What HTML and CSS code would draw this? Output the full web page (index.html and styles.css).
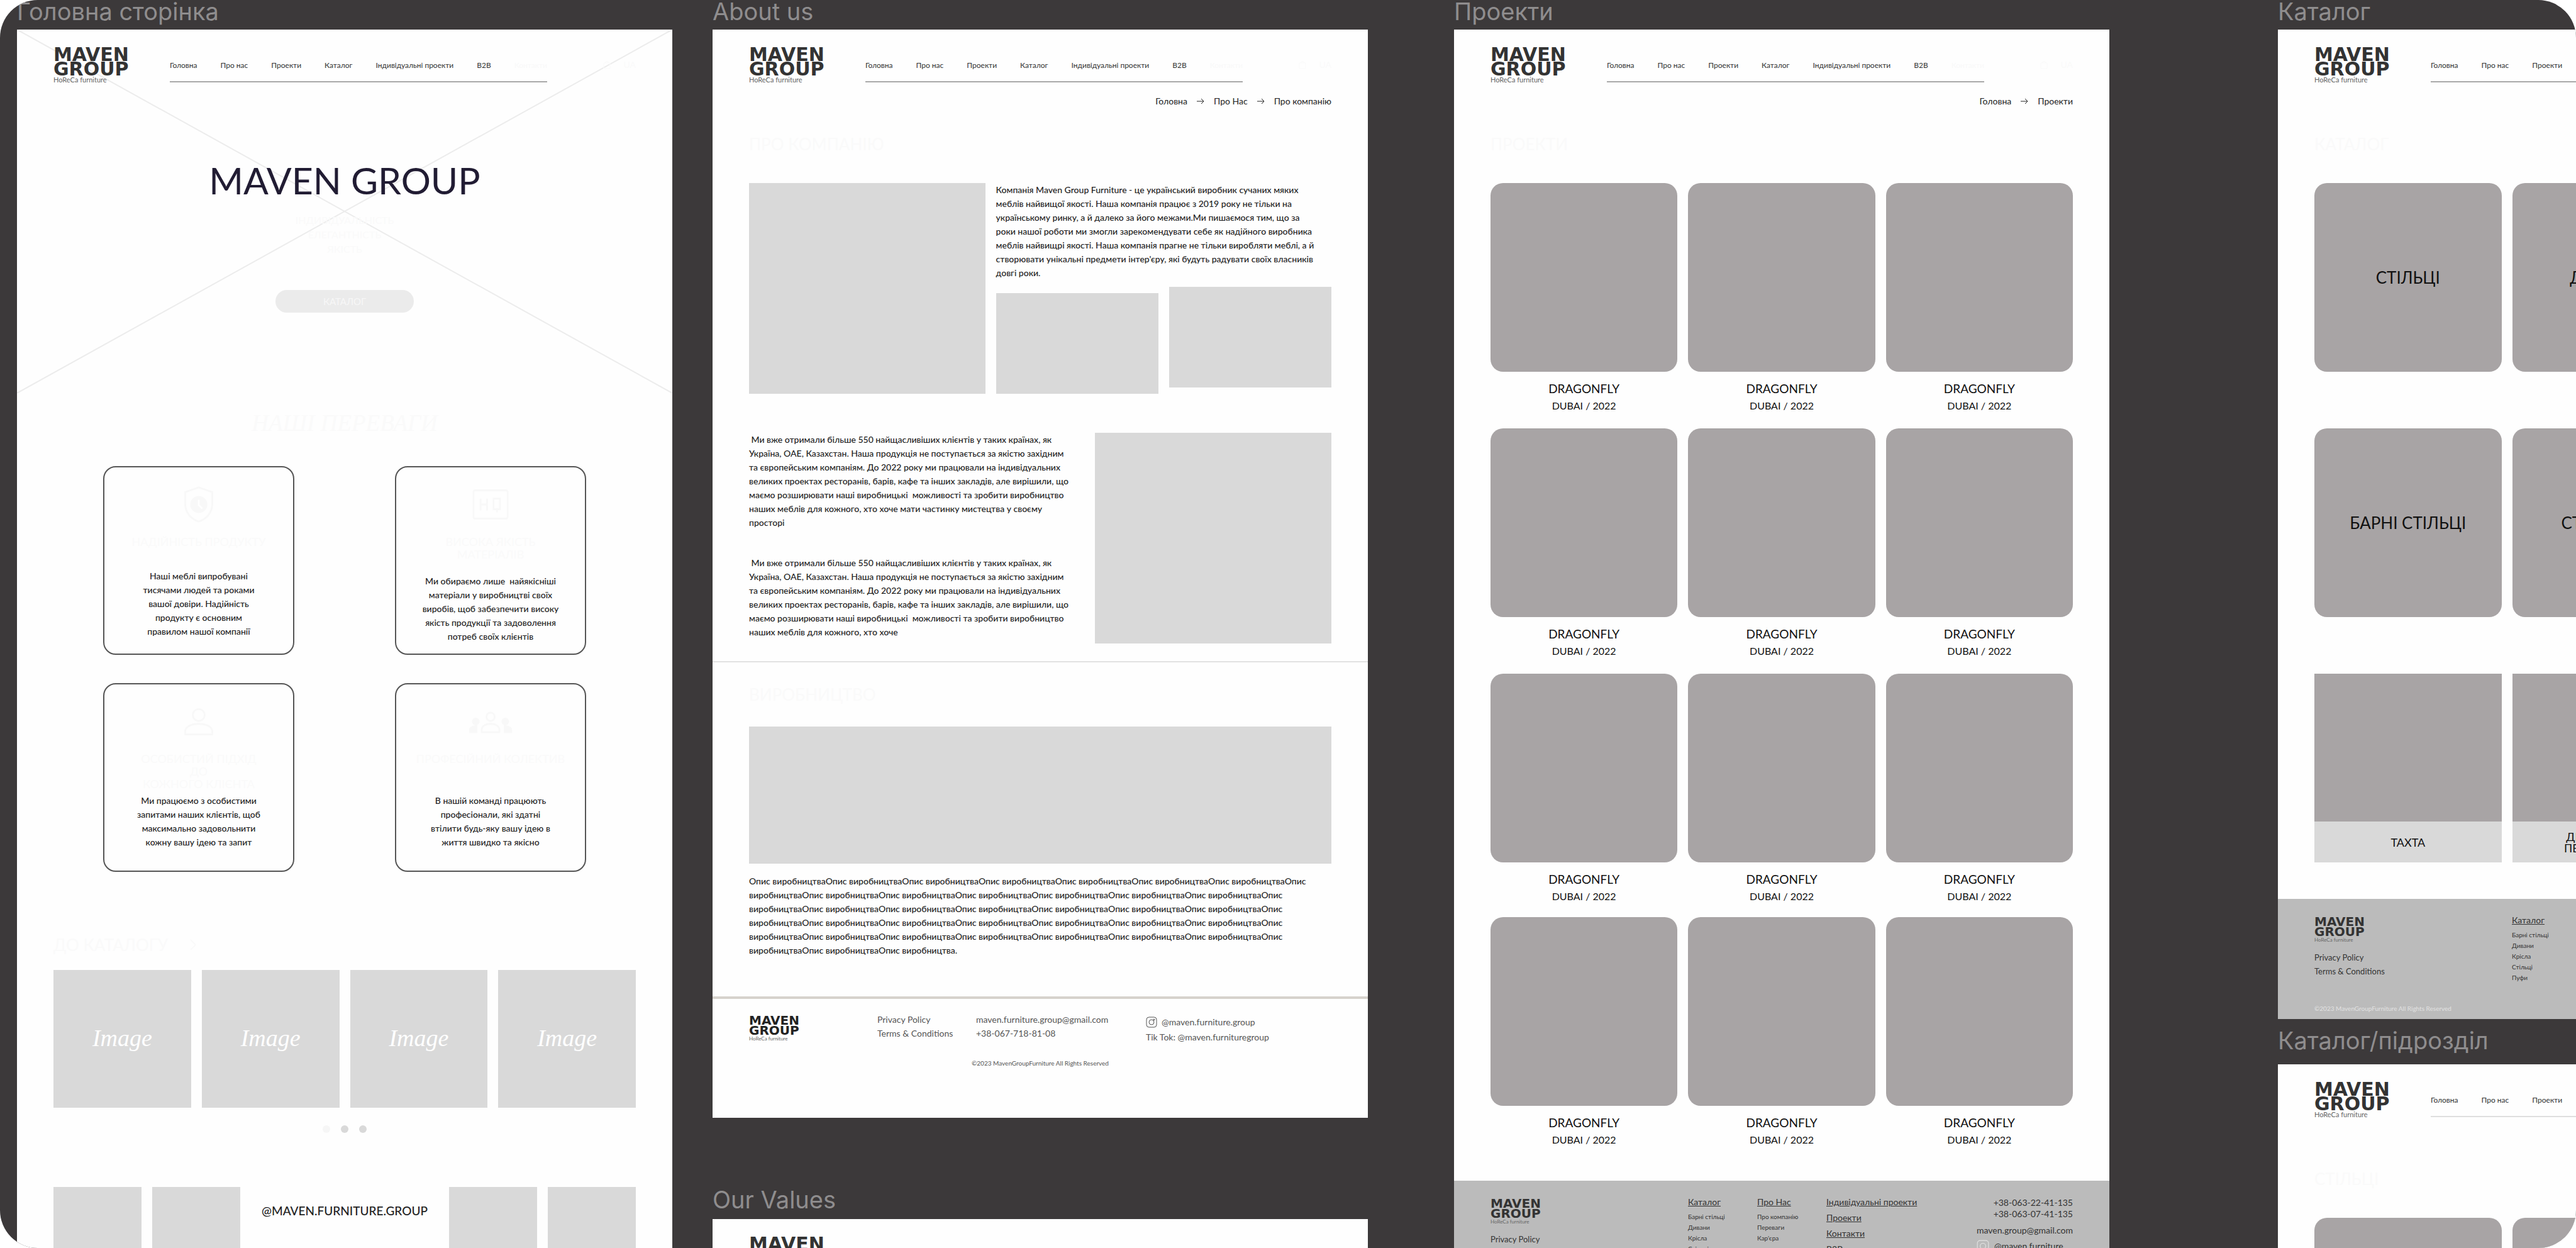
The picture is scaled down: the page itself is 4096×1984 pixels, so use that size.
FILE: index.html
```html
<!DOCTYPE html>
<html lang="uk">
<head>
<meta charset="utf-8">
<title>Maven Group – макети</title>
<link rel="stylesheet" href="styles.css">
</head>
<body>
<main class="canvas">

  <section class="column column-home">
    <h2 class="frame-name">Головна сторінка</h2>
    <article class="artboard">
      <div class="hero">
        <svg class="hero-cross" viewBox="0 0 100 100" preserveAspectRatio="none" aria-hidden="true"><path d="M0 0 100 100M100 0 0 100"/></svg>
        <header class="site-header">
          <div class="logo"><strong>MAVEN<br>GROUP</strong><small>HoReCa furniture</small></div>
          <nav class="menu"><a href="#">Головна</a><a href="#">Про нас</a><a href="#">Проекти</a><a href="#">Каталог</a><a href="#">Індивідуальні проекти</a><a href="#">B2B</a><a href="#" class="faint">Контакти</a></nav>
          <div class="tools"><svg viewBox="0 0 16 16"><path d="M3 5h10v9H3zM5.500 5a2.500 2.500 0 0 1 5 0"/></svg><span>UA</span></div>
        </header>
        <h1 class="hero-title">MAVEN GROUP</h1>
        <p class="hero-values">ІНДИВІДУАЛЬНІСТЬ<br>ЕЛЕГАНТНІСТЬ<br>ЯКІСТЬ</p>
        <button class="hero-button" type="button">КАТАЛОГ</button>
      </div>
      <h2 class="serif-title">НАШІ ПЕРЕВАГИ</h2>
      <div class="features">
        <section class="feature">
          <svg class="feature-icon" viewBox="0 0 64 64"><path d="M32 3 9 11v20c0 14 9 25 23 30 14-5 23-16 23-30V11z"/><circle class="solid" cx="32" cy="32" r="13"/><path class="cut" d="M32 24v9l6 6"/></svg>
          <h3 class="feature-title">НАДІЙНІСТЬ ПРОДУКТУ</h3>
          <p>Наші меблі випробувані<br>тисячами людей та роками<br>вашої довіри. Надійність<br>продукту є основним<br>правилом нашої компанії</p>
        </section>
        <section class="feature">
          <svg class="feature-icon" viewBox="0 0 64 64"><rect x="3" y="8" width="58" height="48" rx="3"/><path d="M15 22v20M15 32h11M26 22v20M37 22h11v18H37zM43 38v7"/></svg>
          <h3 class="feature-title feature-title-mid">ВИСОКА ЯКІСТЬ<br>МАТЕРІАЛІВ</h3>
          <p>Ми обираємо лише&nbsp; найякісніші<br>матеріали у виробництві своїх<br>виробів, щоб забезпечити високу<br>якість продукції та задоволення<br>потреб своїх клієнтів</p>
        </section>
        <section class="feature">
          <svg class="feature-icon" viewBox="0 0 64 64"><circle cx="32" cy="21" r="10"/><path d="M9 54v-5c0-8 10-13 23-13s23 5 23 13v5z"/></svg>
          <h3 class="feature-title feature-title-tall">ОСОБИСТИЙ ПІДХІД<br>ДО<br>КОЖНОГО КЛІЄНТА</h3>
          <p>Ми працюємо з особистими<br>запитами наших клієнтів, щоб<br>максимально задовольнити<br>кожну вашу ідею та запит</p>
        </section>
        <section class="feature">
          <svg class="feature-icon feature-icon-wide" viewBox="0 0 76 64"><circle cx="38" cy="24" r="7"/><path d="M23 50v-4c0-6 6-10 15-10s15 4 15 10v4z"/><circle class="solid" cx="13" cy="32" r="5"/><circle class="solid" cx="63" cy="32" r="5"/><path class="solid" d="M3 50v-4c0-4 5-6 11-6v10zM73 50v-4c0-4-5-6-11-6v10z"/></svg>
          <h3 class="feature-title feature-title-tall">ПРОФЕСІЙНИЙ КОЛЕКТИВ</h3>
          <p>В нашій команді працюють<br>професіонали, які здатні<br>втілити будь-яку вашу ідею в<br>життя швидко та якісно</p>
        </section>
      </div>
      <a class="to-catalog" href="#">ДО КАТАЛОГУ<svg viewBox="0 0 12 20"><path d="m2 2 8 8-8 8"/></svg></a>
      <div class="slides"><div>Image</div><div>Image</div><div>Image</div><div>Image</div></div>
      <div class="dots"><i></i><i></i><i></i></div>
      <div class="instagram"><div class="shot"></div><div class="shot"></div>
        <p class="instagram-name">@MAVEN.FURNITURE.GROUP</p>
        <div class="shot"></div><div class="shot"></div></div>
    </article>
  </section>

  <section class="column column-about">
    <h2 class="frame-name">About us</h2>
    <article class="artboard about">
      <header class="site-header">
        <div class="logo"><strong>MAVEN<br>GROUP</strong><small>HoReCa furniture</small></div>
        <nav class="menu"><a href="#">Головна</a><a href="#">Про нас</a><a href="#">Проекти</a><a href="#">Каталог</a><a href="#">Індивідуальні проекти</a><a href="#">B2B</a><a href="#" class="faint">Контакти</a></nav>
        <div class="tools"><svg viewBox="0 0 16 16"><path d="M3 5h10v9H3zM5.500 5a2.500 2.500 0 0 1 5 0"/></svg><span>UA</span></div>
      </header>
      <nav class="crumbs"><a href="#">Головна</a><svg viewBox="0 0 12 12"><path d="M0 6h11M7 2l4 4-4 4"/></svg><a href="#">Про Нас</a><svg viewBox="0 0 12 12"><path d="M0 6h11M7 2l4 4-4 4"/></svg><a href="#">Про компанію</a></nav>
      <h2 class="page-title">ПРО КОМПАНІЮ</h2>
      <div class="intro">
        <div class="picture"></div>
        <div>
          <p>Компанія Maven Group Furniture - це український виробник сучаних мяких<br>меблів найвищої якості. Наша компанія працює з 2019 року не тільки на<br>українському ринку, а й далеко за його межами.Ми пишаємося тим, що за<br>роки нашої роботи ми змогли зарекомендувати себе як надійного виробника<br>меблів найвищрі якості. Наша компанія прагне не тільки виробляти меблі, а й<br>створювати унікальні предмети інтер'єру, які будуть радувати своїх власників<br>довгі роки.</p>
          <div class="pair"><div class="picture"></div><div class="picture"></div></div>
        </div>
      </div>
      <div class="story">
        <div class="story-text">
          <p>&nbsp;Ми вже отримали більше 550 найщасливіших клієнтів у таких країнах, як<br>Україна, ОАЕ, Казахстан. Наша продукція не поступається за якістю західним<br>та європейським компаніям. До 2022 року ми працювали на індивідуальних<br>великих проектах ресторанів, барів, кафе та інших закладів, але вирішили, що<br>маємо розширювати наші виробницькі&nbsp; можливості та зробити виробництво<br>наших меблів для кожного, хто хоче мати частинку мистецтва у своєму<br>просторі</p>
          <p>&nbsp;Ми вже отримали більше 550 найщасливіших клієнтів у таких країнах, як<br>Україна, ОАЕ, Казахстан. Наша продукція не поступається за якістю західним<br>та європейським компаніям. До 2022 року ми працювали на індивідуальних<br>великих проектах ресторанів, барів, кафе та інших закладів, але вирішили, що<br>маємо розширювати наші виробницькі&nbsp; можливості та зробити виробництво<br>наших меблів для кожного, хто хоче</p>
        </div>
        <div class="picture"></div>
      </div>
      <div class="production">
        <h2 class="page-title">ВИРОБНИЦТВО</h2>
        <div class="picture"></div>
        <p>Опис виробництваОпис виробництваОпис виробництваОпис виробництваОпис виробництваОпис виробництваОпис виробництваОпис<br>виробництваОпис виробництваОпис виробництваОпис виробництваОпис виробництваОпис виробництваОпис виробництваОпис<br>виробництваОпис виробництваОпис виробництваОпис виробництваОпис виробництваОпис виробництваОпис виробництваОпис<br>виробництваОпис виробництваОпис виробництваОпис виробництваОпис виробництваОпис виробництваОпис виробництваОпис<br>виробництваОпис виробництваОпис виробництваОпис виробництваОпис виробництваОпис виробництваОпис виробництваОпис<br>виробництваОпис виробництваОпис виробництва.</p>
      </div>
      <footer class="light-footer">
        <div class="light-footer-row">
          <div class="logo logo-small"><strong>MAVEN<br>GROUP</strong><small>HoReCa furniture</small></div>
          <div><a href="#">Privacy Policy</a><a href="#">Terms &amp; Conditions</a></div>
          <div><a href="#">maven.furniture.group@gmail.com</a><a href="#">+38-067-718-81-08</a></div>
          <div class="social"><a href="#"><svg viewBox="0 0 18 18"><rect x="1" y="1" width="16" height="16" rx="4"/><circle cx="9" cy="9" r="4"/><circle cx="13" cy="5" r="1"/></svg>@maven.furniture.group</a><a href="#">Tik Tok: @maven.furnituregroup</a></div>
        </div>
        <p class="rights">©2023 MavenGroupFurniture All Rights Reserved</p>
      </footer>
    </article>
    <h2 class="frame-name frame-name-values">Our Values</h2>
    <article class="artboard">
      <header class="site-header">
        <div class="logo"><strong>MAVEN<br>GROUP</strong><small>HoReCa furniture</small></div>
      </header>
    </article>
  </section>

  <section class="column column-projects">
    <h2 class="frame-name">Проекти</h2>
    <article class="artboard">
      <header class="site-header">
        <div class="logo"><strong>MAVEN<br>GROUP</strong><small>HoReCa furniture</small></div>
        <nav class="menu"><a href="#">Головна</a><a href="#">Про нас</a><a href="#">Проекти</a><a href="#">Каталог</a><a href="#">Індивідуальні проекти</a><a href="#">B2B</a><a href="#" class="faint">Контакти</a></nav>
        <div class="tools"><svg viewBox="0 0 16 16"><path d="M3 5h10v9H3zM5.500 5a2.500 2.500 0 0 1 5 0"/></svg><span>UA</span></div>
      </header>
      <nav class="crumbs"><a href="#">Головна</a><svg viewBox="0 0 12 12"><path d="M0 6h11M7 2l4 4-4 4"/></svg><a href="#">Проекти</a></nav>
      <h2 class="page-title">ПРОЕКТИ</h2>
      <div class="projects">
        <figure><div class="tile"></div><figcaption><b>DRAGONFLY</b><span>DUBAI / 2022</span></figcaption></figure>
        <figure><div class="tile"></div><figcaption><b>DRAGONFLY</b><span>DUBAI / 2022</span></figcaption></figure>
        <figure><div class="tile"></div><figcaption><b>DRAGONFLY</b><span>DUBAI / 2022</span></figcaption></figure>
        <figure><div class="tile"></div><figcaption><b>DRAGONFLY</b><span>DUBAI / 2022</span></figcaption></figure>
        <figure><div class="tile"></div><figcaption><b>DRAGONFLY</b><span>DUBAI / 2022</span></figcaption></figure>
        <figure><div class="tile"></div><figcaption><b>DRAGONFLY</b><span>DUBAI / 2022</span></figcaption></figure>
        <figure><div class="tile"></div><figcaption><b>DRAGONFLY</b><span>DUBAI / 2022</span></figcaption></figure>
        <figure><div class="tile"></div><figcaption><b>DRAGONFLY</b><span>DUBAI / 2022</span></figcaption></figure>
        <figure><div class="tile"></div><figcaption><b>DRAGONFLY</b><span>DUBAI / 2022</span></figcaption></figure>
        <figure><div class="tile"></div><figcaption><b>DRAGONFLY</b><span>DUBAI / 2022</span></figcaption></figure>
        <figure><div class="tile"></div><figcaption><b>DRAGONFLY</b><span>DUBAI / 2022</span></figcaption></figure>
        <figure><div class="tile"></div><figcaption><b>DRAGONFLY</b><span>DUBAI / 2022</span></figcaption></figure>
      </div>
      <footer class="grey-footer">
        <div class="grey-about">
          <div class="logo logo-small"><strong>MAVEN<br>GROUP</strong><small>HoReCa furniture</small></div>
          <a href="#">Privacy Policy</a><a href="#">Terms &amp; Conditions</a>
          <p class="grey-rights">©2023 MavenGroupFurniture All Rights Reserved</p>
        </div>
        <div class="grey-list"><a class="head" href="#">Каталог</a><a href="#">Барні стільці</a><a href="#">Дивани</a><a href="#">Крісла</a><a href="#">Стільці</a><a href="#">Пуфи</a></div>
        <div class="grey-list"><a class="head" href="#">Про Нас</a><a href="#">Про компанію</a><a href="#">Переваги</a><a href="#">Кар'єра</a></div>
        <div class="grey-heads"><a href="#">Індивідуальні проекти</a><a href="#">Проекти</a><a href="#">Контакти</a><a href="#">B2B</a></div>
        <div class="grey-contacts"><a href="#">+38-063-22-41-135</a><a href="#">+38-063-07-41-135</a><a class="mail" href="#">maven.group@gmail.com</a><a class="insta" href="#"><svg viewBox="0 0 18 18"><rect x="1" y="1" width="16" height="16" rx="4"/><circle cx="9" cy="9" r="4"/></svg>@maven.furniture</a></div>
      </footer>
    </article>
  </section>

  <section class="column column-catalog">
    <h2 class="frame-name">Каталог</h2>
    <article class="artboard">
      <header class="site-header">
        <div class="logo"><strong>MAVEN<br>GROUP</strong><small>HoReCa furniture</small></div>
        <nav class="menu"><a href="#">Головна</a><a href="#">Про нас</a><a href="#">Проекти</a><a href="#">Каталог</a><a href="#">Індивідуальні проекти</a><a href="#">B2B</a><a href="#" class="faint">Контакти</a></nav>
      </header>
      <h2 class="page-title page-title-first">КАТАЛОГ</h2>
      <div class="catalog">
        <a class="tile" href="#">СТІЛЬЦІ</a><a class="tile" href="#">ДИВАНИ</a><a class="tile" href="#">КРІСЛА</a>
        <a class="tile" href="#">БАРНІ СТІЛЬЦІ</a><a class="tile" href="#">СТІЛЬНИЦІ</a><a class="tile" href="#">ПУФИ</a>
        <a class="tile tile-band" href="#"><span>ТАХТА</span></a><a class="tile tile-band" href="#"><span>ДЕКОРАТИВНІ<br>ПЕРЕГОРОДКИ</span></a><a class="tile tile-band" href="#"><span>ЛІЖКА</span></a>
      </div>
      <footer class="grey-footer">
        <div class="grey-about">
          <div class="logo logo-small"><strong>MAVEN<br>GROUP</strong><small>HoReCa furniture</small></div>
          <a href="#">Privacy Policy</a><a href="#">Terms &amp; Conditions</a>
          <p class="grey-rights">©2023 MavenGroupFurniture All Rights Reserved</p>
        </div>
        <div class="grey-list"><a class="head" href="#">Каталог</a><a href="#">Барні стільці</a><a href="#">Дивани</a><a href="#">Крісла</a><a href="#">Стільці</a><a href="#">Пуфи</a></div>
      </footer>
    </article>
    <h2 class="frame-name frame-name-sub">Каталог/підрозділ</h2>
    <article class="artboard">
      <header class="site-header">
        <div class="logo"><strong>MAVEN<br>GROUP</strong><small>HoReCa furniture</small></div>
        <nav class="menu menu-pale"><a href="#">Головна</a><a href="#">Про нас</a><a href="#">Проекти</a><a href="#">Каталог</a><a href="#">Індивідуальні проекти</a><a href="#">B2B</a><a href="#" class="faint">Контакти</a></nav>
      </header>
      <h2 class="page-title page-title-first">СТІЛЬЦІ</h2>
      <div class="catalog"><div class="tile"></div><div class="tile"></div><div class="tile"></div></div>
    </article>
  </section>

</main>
</body>
</html>
```
FILE: styles.css
```css
* { box-sizing: border-box; }
body { margin: 0; background: #fff; color: #222; font-family: Lato, "Open Sans", sans-serif; font-size: 14px; line-height: 22px; }
h1, h2, h3, p, figure { margin: 0; font-weight: 400; }
a { color: inherit; text-decoration: none; }
svg { fill: none; stroke: currentColor; display: block; }

.canvas {
  display: grid;
  grid-template-columns: 27fr 1042fr 64fr 1042fr 137fr 1042fr 268fr 474fr;
  height: 100vh;
  overflow: hidden;
  background: #3c393a;
  border-radius: 60px;
}
.column { min-width: 0; }
.column-home { grid-column: 2; }
.column-about { grid-column: 4; }
.column-projects { grid-column: 6; }
.column-catalog { grid-column: 8; width: 220%; }

.frame-name { height: 47px; font: 400 38px/36px Inter, sans-serif; color: #8f8d8e; white-space: nowrap; margin: 0; }
.frame-name-values { height: 49px; margin-top: 112px; }
.frame-name-sub { height: 56px; margin-top: 16px; }
.artboard { background: #fefefe; white-space: nowrap; overflow: hidden; }
.artboard p { font-weight: 500; }

/* Header */
.site-header { display: flex; padding: 28px 58px 0; height: 84px; }
.logo { width: 140px; color: #333; }
.logo strong { display: block; font: 700 30px/23px "DejaVu Sans", sans-serif; }
.logo small { display: block; font-size: 11px; line-height: 12px; color: #666; }
.logo-small { width: 100px; }
.logo-small strong { font-size: 20px; line-height: 16px; }
.logo-small small { font-size: 8px; line-height: 10px; }
.menu { display: flex; justify-content: space-between; width: 600px; height: 56px; margin-left: 45px; padding-top: 21px; border-bottom: 2px solid #a8a8a8; font-size: 12px; line-height: 16px; color: #333; }
.menu-pale { border-color: #dedede; }
.faint { color: #f9f9f9; }
.tools { display: flex; gap: 18px; margin-left: auto; padding-top: 20px; font-size: 14px; line-height: 16px; color: #fafafa; }
.tools svg { width: 16px; height: 16px; }
.crumbs { display: flex; justify-content: flex-end; align-items: center; gap: 15px; margin: 22px 58px 0; font-size: 14px; line-height: 16px; }
.crumbs svg { width: 12px; height: 12px; }
.page-title { margin: 44px 58px 46px; font-size: 26px; line-height: 32px; color: #fafafa; }
.page-title-first { margin-top: 82px; }

/* Home */
.hero { position: relative; height: 578px; text-align: center; }
.hero-cross { position: absolute; inset: 0; width: 100%; height: 100%; color: #ececec; }
.hero-cross path { stroke-width: 2px; vector-effect: non-scaling-stroke; }
.hero .site-header { position: relative; text-align: left; }
.hero-title { position: relative; margin-top: 127px; font-size: 59px; line-height: 58px; color: #211c33; }
.artboard .hero-values { position: relative; margin-top: 22px; font-size: 16px; font-weight: 400; line-height: 23px; color: #fafafa; }
.hero-button { position: relative; display: block; width: 220px; height: 36px; margin: 54px auto 0; border: 0; border-radius: 18px; background: #ebebeb; color: #f7f7f7; font: 400 15px/20px Lato, sans-serif; }
.serif-title { margin: 26px 0 46px; text-align: center; font: italic 400 37px/44px "Liberation Serif", serif; color: #fafafa; }
.features { display: grid; grid-template-columns: 304px 304px; gap: 45px 160px; justify-content: center; }
.feature { height: 300px; padding-top: 29px; border: 2px solid #555; border-radius: 20px; text-align: center; }
.feature-icon { width: 60px; height: 60px; margin: 0 auto; color: #f8f8f8; stroke-width: 3px; }
.feature-icon-wide { width: 72px; }
.feature-icon .solid { fill: currentColor; }
.feature-icon .cut { color: #fff; }
.feature-title { height: 54px; margin-top: 19px; font-size: 18px; line-height: 20px; color: #fafafa; }
.feature-title-mid { height: 62px; }
.feature-title-tall { height: 66px; }
.to-catalog { display: flex; align-items: center; gap: 34px; margin: 100px 58px 24px; font-size: 26px; line-height: 32px; color: #fafafa; }
.to-catalog svg { width: 12px; height: 20px; stroke-width: 2px; }
.slides { display: grid; grid-template-columns: repeat(4, 1fr); gap: 17px; margin: 0 58px; }
.slides div { display: grid; place-items: center; height: 219px; padding-bottom: 4px; background: #d9d9d9; color: #fff; font: italic 400 38px/44px "Liberation Serif", serif; }
.dots { display: flex; justify-content: center; gap: 17px; margin: 28px 0 86px; }
.dots i { width: 12px; height: 12px; border-radius: 50%; background: #d9d9d9; }
.dots i:first-child { background: #f6f6f6; }
.instagram { display: flex; gap: 17px; margin: 0 58px; }
.shot { width: 140px; height: 140px; background: #d9d9d9; }
.instagram-name { flex: 1; padding-top: 26px; text-align: center; font-size: 19px; line-height: 24px; }

/* About */
.picture { background: #d9d9d9; }
.intro { display: grid; grid-template-columns: 376fr 534fr; gap: 17px; margin: 0 58px 62px; height: 335px; }
.pair { display: grid; grid-template-columns: 1fr 1fr; gap: 17px; margin-top: 11px; }
.pair .picture { height: 160px; }
.pair .picture:first-child { margin-top: 10px; }
.story { display: grid; grid-template-columns: 550fr 376fr; margin: 0 58px 28px; height: 335px; }
.story-text { display: grid; gap: 42px; align-content: start; }
.production { border-top: 2px solid #e2e2e2; padding: 0 58px 62px; }
.production .page-title { margin: 35px 0; }
.production .picture { height: 218px; margin-bottom: 17px; }
.light-footer { height: 193px; border-top: 4px solid #d6d2cc; padding: 22px 58px 0; color: #555; }
.light-footer-row { display: grid; grid-template-columns: 204px 157px 270px 1fr; }
.light-footer-row .logo { padding-top: 4px; color: #222; }
.light-footer a { display: block; }
.light-footer .social { padding-top: 3px; }
.light-footer .social a { display: flex; align-items: center; gap: 7px; line-height: 24px; }
.social svg { width: 18px; height: 18px; }
.artboard .rights { margin-top: 21px; text-align: center; font-size: 10px; font-weight: 400; line-height: 16px; }

/* Projects and catalog */
.projects { display: grid; grid-template-columns: repeat(3, 1fr); gap: 26px 17px; margin: 0 58px 55px; }
.projects figure:nth-last-child(-n+3) { margin-top: -3px; }
.tile { display: grid; place-items: center; height: 300px; border-radius: 20px; background: #a8a4a5; color: #111; font-size: 26px; line-height: 28px; }
figcaption { display: grid; gap: 5px; padding-top: 15px; text-align: center; color: #111; }
figcaption b { font-weight: 400; font-size: 19px; line-height: 24px; }
figcaption span { font-size: 16px; line-height: 20px; }
.catalog { display: grid; grid-template-columns: repeat(3, 1fr); gap: 90px 17px; margin: 0 58px 58px; }
.tile-band { border-radius: 0; align-items: end; }
.tile-band span { display: grid; place-items: center; align-content: center; width: 100%; height: 65px; background: #d9d9d9; font-size: 18px; line-height: 18px; text-align: center; }

.grey-footer { display: grid; grid-template-columns: 314px 110px 110px 1fr auto; height: 191px; padding: 26px 58px 0; background: #bbb; color: #333; }
.grey-footer a { display: block; }
.grey-about { font-size: 13px; line-height: 22px; }
.grey-about .logo { margin-bottom: 12px; padding-top: 2px; }
.artboard .grey-rights { margin-top: 40px; font-size: 10px; font-weight: 400; line-height: 16px; color: #e2e2e2; }
.grey-list { font-size: 10px; line-height: 17px; }
.grey-list .head { margin-bottom: 7px; font-size: 14px; line-height: 16px; text-decoration: underline; }
.grey-heads { font-size: 14px; line-height: 16px; }
.grey-heads a { margin-bottom: 9px; text-decoration: underline; }
.grey-contacts { text-align: right; font-size: 14px; line-height: 18px; }
.grey-contacts .mail { margin: 8px 0 6px; }
.grey-contacts .insta { display: flex; align-items: center; gap: 8px; }
.insta svg { width: 20px; height: 20px; color: #e4e4e4; }
```
